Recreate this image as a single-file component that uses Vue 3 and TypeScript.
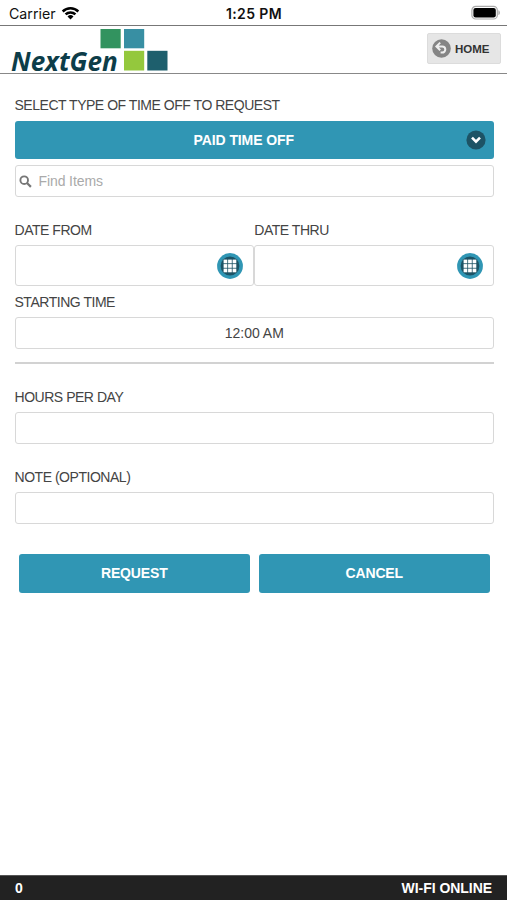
<script setup lang="ts">
import { ref } from 'vue'

const search = ref('')
const hours = ref('')
const note = ref('')
const pending = ref(0)
const cells = [0, 1, 2, 3, 4, 5, 6, 7, 8].map((i) => ({ x: 6.6 + (i % 3) * 4.5, y: 6.6 + Math.floor(i / 3) * 4.5 }))
const dates = ['DATE FROM', 'DATE THRU']
</script>

<template>
  <div class="screen">
    <div class="status">
      <div class="carrier">
        <span>Carrier</span>
        <svg width="19" height="14" viewBox="0 0 18 14">
          <path d="M0.3 4.6a12.4 12.4 0 0 1 17.4 0l-1.7 1.8a10 10 0 0 0-14 0z" />
          <path d="M3.2 7.5a8.4 8.4 0 0 1 11.6 0l-1.8 1.8a5.8 5.8 0 0 0-8 0z" />
          <path d="M6 10.4a4.4 4.4 0 0 1 6 0L9 13.4z" />
        </svg>
      </div>
      <span class="clock">1:25 PM</span>
      <svg class="battery" width="30" height="16" viewBox="0 0 30 16">
        <rect x="0.9" y="1.4" width="25.4" height="12.6" rx="3.8" fill="#fff" stroke="#aaa" stroke-width="1.2" />
        <rect x="2.4" y="2.9" width="22.4" height="9.6" rx="2.2" />
        <path d="M27.4 5.3c2 .6 2 4.2 0 4.8z" fill="#aaa" />
      </svg>
    </div>

    <header class="header">
      <div class="logo">
        <span class="brand">NextGen</span>
        <svg width="70" height="44" viewBox="0 0 70 44">
          <rect x="1.5" y="1" width="20.2" height="19.3" fill="#32935f" />
          <rect x="25" y="1" width="20.2" height="19.3" fill="#388fa3" />
          <rect x="25" y="22.8" width="20.2" height="19.7" fill="#94c83d" />
          <rect x="48.3" y="22.8" width="20.2" height="19.7" fill="#1e5f6d" />
        </svg>
      </div>
      <button class="home">
        <svg width="19" height="19" viewBox="0 0 19 19">
          <circle cx="9.5" cy="9.5" r="9.3" fill="#858585" />
          <path d="M8.2 3.6L4.4 7.4l3.8 3.8M4.9 7.4h5.3a3.1 3.1 0 0 1 0 6.2H8.6" fill="none" stroke="#eee" stroke-width="2" />
        </svg>
        <span>HOME</span>
      </button>
    </header>

    <main class="form">
      <div class="label first">SELECT TYPE OF TIME OFF TO REQUEST</div>
      <button class="select">
        <span class="select-text">PAID TIME OFF</span>
        <svg width="20" height="20" viewBox="0 0 20 20">
          <circle cx="10" cy="10" r="9.6" fill="#1d5365" />
          <path d="M6 7.6l4 4 4-4" fill="none" stroke="#fff" stroke-width="2.6" />
        </svg>
      </button>
      <div class="box search">
        <svg width="13" height="13" viewBox="0 0 13 13">
          <circle cx="5.2" cy="5.2" r="3.8" fill="none" stroke="#777" stroke-width="1.9" />
          <path d="M8 8l3.9 3.9" stroke="#777" stroke-width="2.2" />
        </svg>
        <input v-model="search" placeholder="Find Items" />
      </div>

      <div class="dates">
        <div v-for="d in dates" :key="d" class="date">
          <div class="label">{{ d }}</div>
          <div class="box datebox">
            <svg width="26" height="26" viewBox="0 0 26 26">
              <circle cx="13" cy="13" r="12.9" fill="#3096b4" />
              <circle cx="13" cy="13" r="9.4" fill="#1d5365" />
              <rect v-for="(c, i) in cells" :key="i" :x="c.x" :y="c.y" width="3.7" height="3.7" fill="#fff" />
            </svg>
          </div>
        </div>
      </div>

      <div class="label start">STARTING TIME</div>
      <div class="box time"><span>12:00 AM</span></div>
      <hr />
      <div class="label hours">HOURS PER DAY</div>
      <div class="box"><input v-model="hours" /></div>
      <div class="label note">NOTE (OPTIONAL)</div>
      <div class="box"><input v-model="note" /></div>

      <div class="actions">
        <button>REQUEST</button>
        <button>CANCEL</button>
      </div>
    </main>

    <footer class="footer">
      <span>{{ pending }}</span>
      <span class="wifi">WI-FI ONLINE</span>
    </footer>
  </div>
</template>

<style>
body { background: #fff; }
</style>

<style scoped>
.screen, .screen * { box-sizing: border-box; }
.screen {
  height: 900px;
  display: flex;
  flex-direction: column;
  font-family: "Liberation Sans", Arial, sans-serif;
  font-size: 14px;
  color: #444;
  background: #fff;
}
button { border: 0; margin: 0; padding: 0; font-family: inherit; }
svg { display: block; flex: none; }
.status {
  height: 25px;
  display: grid;
  grid-template-columns: 1fr auto 1fr;
  align-items: center;
  padding: 2px 6px 0 9px;
  font-family: Inter, sans-serif;
  color: #111;
}
.carrier { display: flex; align-items: center; gap: 5px; font-size: 14.2px; }
.carrier svg { margin-top: -2px; }
.clock { font-size: 14px; font-weight: 600; letter-spacing: 0.4px; margin-right: 2px; }
.battery { justify-self: end; margin-top: -1px; }
.header {
  height: 49px;
  border-top: 1px solid #777;
  border-bottom: 1px solid #888;
  display: flex;
  justify-content: space-between;
  padding: 0 6px 0 11px;
}
.logo { display: flex; align-items: flex-start; padding-top: 2px; }
.brand {
  width: 88px;
  height: 44px;
  padding-top: 16px;
  font: italic 700 26px/34px "Open Sans", sans-serif;
  color: #0d3d49;
  white-space: nowrap;
}
.home {
  width: 74px;
  height: 31px;
  margin-top: 7px;
  padding-left: 4px;
  display: flex;
  align-items: center;
  gap: 4px;
  border-radius: 2px;
  background: #e6e6e6;
  border: 1px solid #dcdcdc;
  color: #333;
  font-size: 11.5px;
  font-weight: 700;
}
.form { flex: 1; padding: 0 13px 0 14.5px; display: flex; flex-direction: column; }
.label { height: 16px; line-height: 16px; font-size: 14px; letter-spacing: -0.47px; white-space: nowrap; }
.first { margin: 23px 0 7.5px; }
.select {
  height: 38px;
  display: grid;
  grid-template-columns: 1fr 20px;
  align-items: center;
  padding: 0 8px 0 0;
  border-radius: 3px;
  background: #3096b4;
  color: #fff;
}
.select-text { font-size: 14px; font-weight: 700; letter-spacing: -0.1px; padding-left: 7px; }
.box {
  height: 32px;
  border: 1px solid #d8d8d8;
  border-radius: 3px;
  display: flex;
  align-items: center;
  background: #fff;
}
input {
  flex: 1;
  min-width: 0;
  border: 0;
  outline: 0;
  padding: 0;
  background: transparent;
  color: #444;
  font: 14px "Liberation Sans", Arial, sans-serif;
  letter-spacing: -0.1px;
}
input::placeholder { color: #aaa; opacity: 1; }
.search { margin-top: 6.5px; padding-left: 3px; gap: 7px; }
.dates { display: grid; grid-template-columns: 1fr 1fr; margin-top: 25px; }
.datebox { height: 41px; margin-top: 7px; justify-content: flex-end; padding-right: 10px; }
.start { margin: 8px 0 7px; }
.time { justify-content: center; }
hr { width: 100%; height: 2px; border: 0; margin: 13px 0 0; background: #d2d2d2; }
.hours { margin: 25px 0 7px; }
.note { margin: 25px 0 7px; }
.actions {
  display: grid;
  grid-template-columns: 1fr 1fr;
  gap: 8.5px;
  margin-top: 30px;
  padding: 0 4px;
}
.actions button {
  height: 38.5px;
  border-radius: 3px;
  background: #3096b4;
  color: #fff;
  font-size: 14px;
  font-weight: 700;
  letter-spacing: -0.15px;
}
.footer {
  height: 25px;
  display: flex;
  justify-content: space-between;
  align-items: center;
  padding: 0 15px;
  background: #222;
  border-top: 1px solid #555;
  color: #fff;
  font-weight: 700;
  font-size: 14px;
}
.wifi { letter-spacing: -0.05px; }
</style>
